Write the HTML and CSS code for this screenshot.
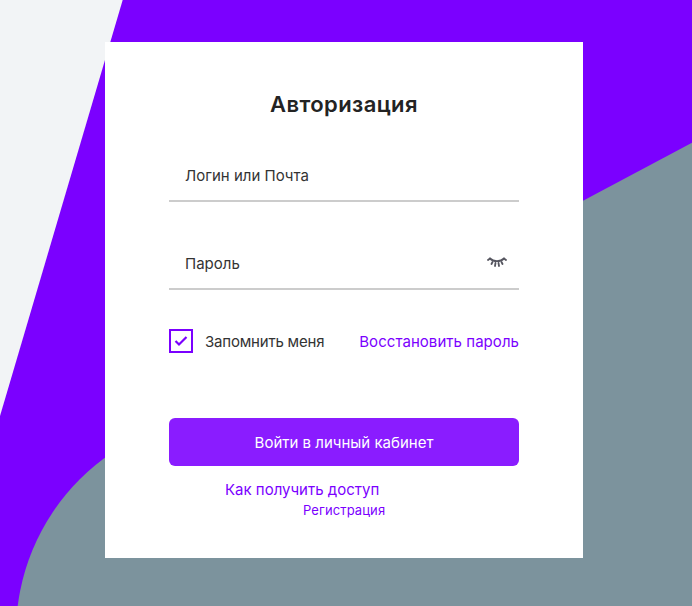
FILE: index.html
```html
<!DOCTYPE html>
<html lang="ru">
<head>
  <meta charset="UTF-8">
  <title>Авторизация</title>
  <link rel="stylesheet" href="styles.css">
</head>
<body>
  <svg class="backdrop" width="692" height="606" viewBox="0 0 692 606">
    <polygon fill="#f2f4f6" points="0,0 122.7,0 0,416"/>
    <circle fill="#7c939d" cx="233" cy="633" r="217"/>
    <polygon fill="#7c939d" points="233,500 583,200.7 692,142.7 692,606 233,606"/>
  </svg>
  <div class="page">
    <form class="card">
      <h1 class="title">Авторизация</h1>
      <div class="field field-login">
        <span>Логин или Почта</span>
      </div>
      <div class="field field-pass">
        <span>Пароль</span>
        <svg class="eye" width="20" height="12" viewBox="0 0 20 12" fill="none" stroke="#55555f" stroke-width="1.8" stroke-linecap="round">
          <path d="M3 1.5C6.5 5 13.5 5 17 1.5"/>
          <path d="M1 3 3 1.5M19 3 17 1.5M5.5 5 4.5 7M14.5 5 15.5 7M8.5 6 8 9M11.5 6 12 9"/>
        </svg>
      </div>
      <div class="options">
        <label class="remember">
          <span class="check">
            <svg width="14" height="12" viewBox="0 0 14 12" fill="none" stroke="#7b00ff" stroke-width="2.2">
              <path d="M1.5 6 5 9.5 12.5 2"/>
            </svg>
          </span>
          Запомнить меня
        </label>
        <a class="link restore" href="#">Восстановить пароль</a>
      </div>
      <button class="submit" type="button">Войти в личный кабинет</button>
      <a class="link how" href="#">Как получить доступ</a>
      <a class="link register" href="#">Регистрация</a>
    </form>
  </div>
</body>
</html>
```

FILE: styles.css
```css
html, body {
  margin: 0;
  height: 606px;
  overflow: hidden;
}
body {
  background: #7b00ff;
  font-family: Inter, "Noto Sans", sans-serif;
  color: #333;
  position: relative;
}
.backdrop {
  position: absolute;
  left: 0;
  top: 0;
}
.page {
  position: relative;
  padding: 42px 0 0 105px;
}
.card {
  box-sizing: border-box;
  width: 478px;
  height: 516px;
  background: #fff;
  padding: 47px 64px 0;
  display: flex;
  flex-direction: column;
}
.title {
  margin: 0;
  font-size: 22px;
  line-height: 30px;
  font-weight: 600;
  letter-spacing: 0.4px;
  text-align: center;
  color: #232323;
}
.field {
  height: 64px;
  box-sizing: border-box;
  border-bottom: 2px solid #ccc;
  padding: 0 12px 15px 16px;
  display: flex;
  align-items: flex-end;
  justify-content: space-between;
  font-size: 15px;
  line-height: 18px;
}
.field-login {
  margin-top: 19px;
}
.field-pass {
  margin-top: 24px;
}
.eye {
  display: block;
  margin-bottom: 4px;
}
.options {
  margin-top: 39px;
  height: 24px;
  display: flex;
  align-items: center;
  justify-content: space-between;
  font-size: 15px;
}
.remember {
  display: flex;
  align-items: center;
  gap: 12px;
  letter-spacing: -0.2px;
}
.check {
  box-sizing: border-box;
  width: 24px;
  height: 24px;
  border: 2px solid #7b00ff;
  display: flex;
  align-items: center;
  justify-content: center;
}
.link {
  color: #7b00ff;
  text-decoration: none;
}
.restore {
  letter-spacing: 0.05px;
}
.submit {
  margin-top: 65px;
  height: 48px;
  border: 0;
  border-radius: 6px;
  background: #8a1cff;
  color: #fff;
  font: 400 15px Inter, "Noto Sans", sans-serif;
}
.how {
  margin: 15px 0 0 56px;
  font-size: 15px;
  line-height: 18px;
}
.register {
  margin: 3px 0 0 134px;
  font-size: 13px;
  line-height: 16px;
  letter-spacing: 0.1px;
}
```
